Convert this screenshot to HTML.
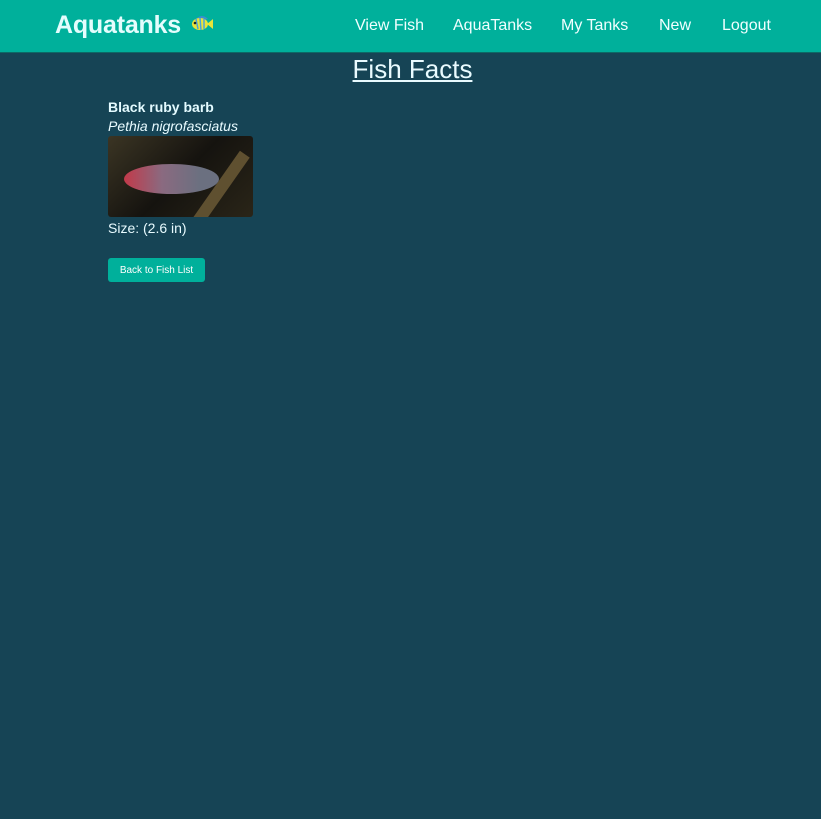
<!DOCTYPE html>
<html><head><meta charset="utf-8"><style>
body{margin:0;width:821px;height:819px;background:#164455;font-family:"Liberation Sans",sans-serif;color:#e8fbff;overflow:hidden}
.nav{height:52px;background:#00b09b;border-bottom:1px solid #0d6a66;position:relative}
.brand{position:absolute;left:55px;top:11px;font-size:25px;font-weight:bold;color:#e4fdfd;letter-spacing:-0.2px}
.links{position:absolute;top:17px;font-size:16px;color:#f0ffff}
.links span{position:absolute;white-space:nowrap}
h1{margin:0;position:absolute;left:0;width:825px;text-align:center;top:54px;font-size:26px;font-weight:normal;text-decoration:underline;color:#e9fbff}
.c{position:absolute;left:108px;top:99px}
.b{font-weight:bold;font-size:14px;color:#e4fbff}
.i{font-style:italic;font-size:14px;margin-top:3px}
.img{width:145px;height:81px;border-radius:3px;margin-top:2px;position:relative;overflow:hidden;background:linear-gradient(135deg,#3b3524,#15130f 50%,#2a2518)}
.btn{position:absolute;left:108px;top:258px;width:97px;height:24px;background:#00b09b;border-radius:3px;font-size:10px;color:#fff;display:flex;align-items:center;justify-content:center}
</style></head><body>
<div class="nav"><div class="brand">Aquatanks <svg width="26" height="24" viewBox="0 0 26 24" style="vertical-align:-2px"><path d="M6 10 Q13 1 20 8 Z" fill="#3a8fd0"/><ellipse cx="12" cy="13" rx="8" ry="6" fill="#e8e43a"/><path d="M8 8 L10 18 M12 7 L13 19 M16 8 L16 18" stroke="#4aa3d8" stroke-width="1.5"/><path d="M19 13 L25 8 L25 18 Z" fill="#e8e43a"/><circle cx="7" cy="12" r="1.3" fill="#222"/></svg></div>
<div class="links"><span style="left:355px">View Fish</span><span style="left:453px">AquaTanks</span><span style="left:561px">My Tanks</span><span style="left:659px">New</span><span style="left:722px">Logout</span></div></div>
<h1>Fish Facts</h1>
<div class="c"><div class="b">Black ruby barb</div><div class="i">Pethia nigrofasciatus</div>
<div class="img"><div style="position:absolute;left:105px;top:10px;width:12px;height:90px;background:#5f5030;transform:rotate(35deg)"></div><div style="position:absolute;left:16px;top:28px;width:95px;height:30px;border-radius:50%;background:linear-gradient(90deg,#c23a4a,#8a6a80 40%,#6b7080 80%)"></div></div>
<div style="font-size:14px;margin-top:3px">Size: (2.6 in)</div></div>
<div class="btn">Back to Fish List</div>
</body></html>
